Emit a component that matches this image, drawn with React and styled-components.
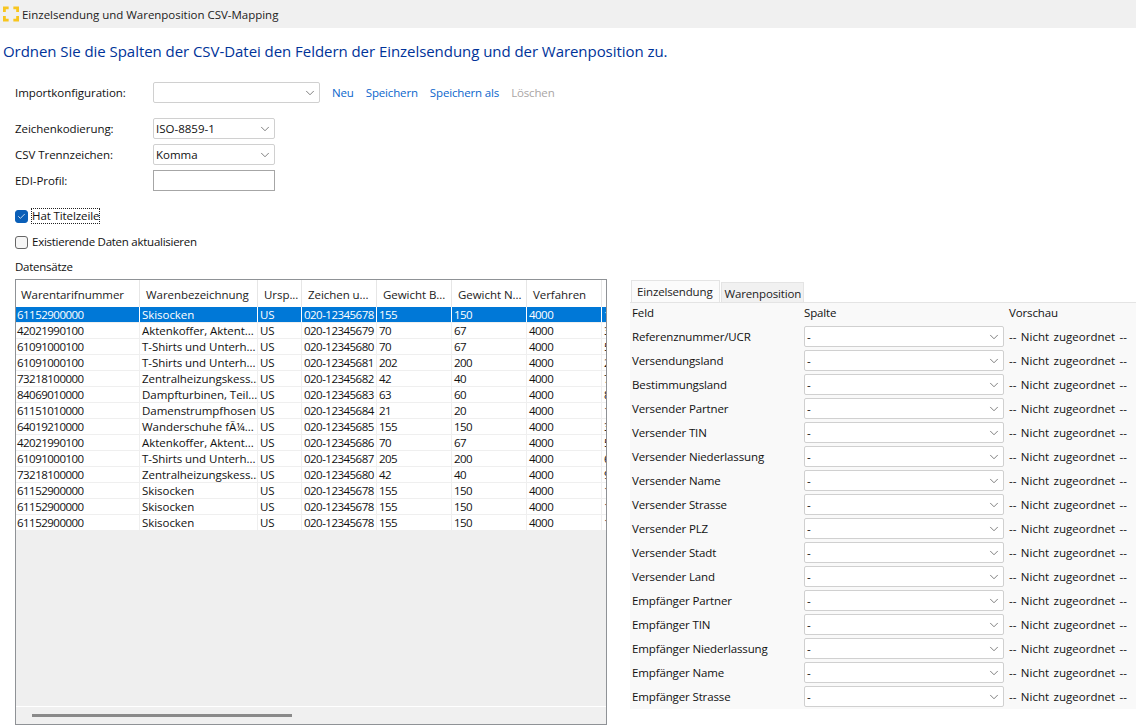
import React from 'react';
import styled, { createGlobalStyle } from 'styled-components';
import { ChevronDown, Check } from 'lucide-react';

const Global = createGlobalStyle`
  html, body { margin: 0; padding: 0; background: #fff; overflow: hidden; }
  body { font-family: "Open Sans", "Noto Sans", "Liberation Sans", sans-serif; font-size: 11.5px; color: #111; }
  * { box-sizing: border-box; }
`;

const Page = styled.div`width: 1136px; height: 725px; display: flex; flex-direction: column; overflow: hidden;`;
const TitleBar = styled.div`height: 28px; background: #f0f0f0; display: flex; align-items: center; gap: 3px; padding: 0 0 0 3px; font-size: 11.5px; color: #222; letter-spacing: -0.02px;`;
const Heading = styled.h1`margin: 14px 0 0 3px; height: 18px; font-size: 15px; line-height: 18px; font-weight: 400; color: #003399; letter-spacing: -0.05px;`;
const Body = styled.div`flex: 1; display: flex; flex-direction: column; padding: 22px 0 0 15px; min-height: 0;`;
const ConfigRow = styled.div`display: flex; align-items: center; height: 21px;`;
const FieldRow = styled.div`display: flex; align-items: center; height: 21px; margin-top: ${p => p.$mt || 5}px;`;
const FieldLabel = styled.label`width: 138px; flex: none; color: #111; letter-spacing: -0.05px;`;
const SelectBox = styled.div`
  width: ${p => p.$w}px; height: 21px; flex: none; background: #fff; border: 1px solid #d0d0d0; border-radius: 2px;
  display: flex; align-items: center; justify-content: space-between; padding: 0 2px 0 2px; color: #111; letter-spacing: 0;
  svg { color: #4a4a4a; }
`;
const TextBox = styled.div`width: 122px; height: 21px; border: 1px solid #a6a6a6; background: #fff;`;
const LinkBar = styled.div`display: flex; margin-left: 12px; gap: 12px; letter-spacing: -0.15px;`;
const Action = styled.a`color: ${p => p.$off ? '#a9a5a5' : '#0a66cc'};`;
const CheckRow = styled.div`display: flex; align-items: center; height: 16px; margin-top: ${p => p.$mt}px; gap: 3px;`;
const CheckBoxMark = styled.span`
  width: 13px; height: 13px; border-radius: 3px; display: inline-flex; align-items: center; justify-content: center;
  background: ${p => p.$on ? '#0a5fb8' : '#f6f6f6'}; border: 1px solid ${p => p.$on ? '#0a5fb8' : '#666'}; color: #fff;
`;
const CheckLabel = styled.span`
  border: 1px dotted ${p => p.$focus ? '#222' : 'transparent'}; line-height: 14px; padding: 0;
  letter-spacing: ${p => p.$focus ? '-0.1px' : '-0.26px'};
`;
const SectionLabel = styled.div`margin-top: 9px; height: 16px; line-height: 16px; letter-spacing: -0.25px;`;
const Columns = styled.div`display: flex; align-items: flex-start; gap: 23px; margin-top: 4px; flex: 1; min-height: 0;`;
const TableFrame = styled.div`width: 592px; height: 446px; flex: none; border: 1px solid #8f9296; background: #efefef; display: flex; flex-direction: column; overflow: hidden;`;
const TableScroll = styled.div`flex: 1; overflow: hidden; min-height: 0;`;
const HeadRow = styled.div`display: flex; height: 27px; background: #fff; width: 600px;`;
const HeadCell = styled.div`
  width: ${p => p.$w}px; flex: none; padding: 1px 0 0 6px; line-height: 27px; white-space: nowrap; overflow: hidden;
  border-right: 1px solid #e6e6e6; color: #222; letter-spacing: -0.05px;
  &:first-child { padding-left: 5px; }
`;
const Row = styled.div`display: flex; height: 16px; width: 600px; background: ${p => p.$sel ? '#0078d7' : '#fff'}; color: ${p => p.$sel ? '#fff' : '#111'}; border-bottom: 1px solid #efefef;`;
const Cell = styled.div`
  width: ${p => p.$w}px; flex: none; padding: 0 0 0 2px; line-height: 15px; white-space: nowrap; overflow: hidden;
  border-right: 1px solid ${p => p.$sel ? '#fff' : '#efefef'};
  letter-spacing: ${p => p.$num ? '-0.52px' : '-0.05px'};
  &:first-child { padding-left: 1px; }
`;
const HScroll = styled.div`height: 18px; flex: none; border-top: 1px solid #fff; background: #f0f0f0; display: flex; align-items: center; padding-left: 16px;`;
const Thumb = styled.div`width: 260px; height: 3px; background: #8a8a8a;`;
const MapPanel = styled.div`width: 506px; flex: none; display: flex; flex-direction: column; margin-top: 1px;`;
const TabBar = styled.div`display: flex; align-items: flex-end; height: 22px; padding-left: 1px;`;
const Tab = styled.div`
  height: ${p => p.$on ? 22 : 20}px; padding: 0 ${p => p.$on ? '6px 0 5px' : '2px 0 3px'}; margin-right: 1px; line-height: ${p => p.$on ? 21 : 22}px; white-space: nowrap;
  background: ${p => p.$on ? '#fbfbfb' : '#f1f1f1'}; border: 1px solid #e4e4e4; border-bottom: none; color: #222; letter-spacing: -0.15px;
`;
const MapBody = styled.div`height: 407px; background: #f9f9f9; border-top: 1px solid #e4e4e4; overflow: hidden; padding: 0 0 0 2px; letter-spacing: -0.13px;`;
const MapHead = styled.div`display: grid; grid-template-columns: 172px 205px 1fr; height: 20px; line-height: 20px;`;
const MapRow = styled.div`display: grid; grid-template-columns: 172px 205px 1fr; height: 21px; align-items: center; margin-top: 3px; white-space: nowrap;`;
const Preview = styled.span`word-spacing: 1.4px; letter-spacing: 0.02px;`;

const Chevron = () => <ChevronDown size={14} strokeWidth={1.2} />;

const Logo = () => (
  <svg width="16" height="16" viewBox="0 0 17 16">
    <path d="M0 0h6v3H3v3H0zM11 0h6v6h-3V3h-3zM0 10h3v3h3v3H0zM14 10h3v6h-6v-3h3z" fill="#f7c51e" />
  </svg>
);

const cols = [124, 118, 44, 75, 75, 75, 75, 14];
const heads = ['Warentarifnummer', 'Warenbezeichnung', 'Ursp...', 'Zeichen u...', 'Gewicht B...', 'Gewicht N...', 'Verfahren', ''];
const rows = [
  ['61152900000', 'Skisocken', 'US', '020-12345678', '155', '150', '4000', '1'],
  ['42021990100', 'Aktenkoffer, Aktent...', 'US', '020-12345679', '70', '67', '4000', '3'],
  ['61091000100', 'T-Shirts und Unterh...', 'US', '020-12345680', '70', '67', '4000', '5'],
  ['61091000100', 'T-Shirts und Unterh...', 'US', '020-12345681', '202', '200', '4000', '2'],
  ['73218100000', 'Zentralheizungskess...', 'US', '020-12345682', '42', '40', '4000', '7'],
  ['84069010000', 'Dampfturbinen, Teil...', 'US', '020-12345683', '63', '60', '4000', '8'],
  ['61151010000', 'Damenstrumpfhosen', 'US', '020-12345684', '21', '20', '4000', '1'],
  ['64019210000', 'Wanderschuhe fÃ¼...', 'US', '020-12345685', '155', '150', '4000', '3'],
  ['42021990100', 'Aktenkoffer, Aktent...', 'US', '020-12345686', '70', '67', '4000', '5'],
  ['61091000100', 'T-Shirts und Unterh...', 'US', '020-12345687', '205', '200', '4000', '6'],
  ['73218100000', 'Zentralheizungskess...', 'US', '020-12345680', '42', '40', '4000', '9'],
  ['61152900000', 'Skisocken', 'US', '020-12345678', '155', '150', '4000', '1'],
  ['61152900000', 'Skisocken', 'US', '020-12345678', '155', '150', '4000', '1'],
  ['61152900000', 'Skisocken', 'US', '020-12345678', '155', '150', '4000', '1'],
];
const fields = ['Referenznummer/UCR', 'Versendungsland', 'Bestimmungsland', 'Versender Partner', 'Versender TIN', 'Versender Niederlassung', 'Versender Name', 'Versender Strasse', 'Versender PLZ', 'Versender Stadt', 'Versender Land', 'Empfänger Partner', 'Empfänger TIN', 'Empfänger Niederlassung', 'Empfänger Name', 'Empfänger Strasse'];

export default function App() {
  return (
    <Page>
      <Global />
      <TitleBar><Logo /><span>Einzelsendung und Warenposition CSV-Mapping</span></TitleBar>
      <Heading>Ordnen Sie die Spalten der CSV-Datei den Feldern der Einzelsendung und der Warenposition zu.</Heading>
      <Body>
        <ConfigRow>
          <FieldLabel>Importkonfiguration:</FieldLabel>
          <SelectBox $w={167}><span /><Chevron /></SelectBox>
          <LinkBar>
            <Action>Neu</Action><Action>Speichern</Action><Action>Speichern als</Action><Action $off>Löschen</Action>
          </LinkBar>
        </ConfigRow>
        <FieldRow $mt={15}><FieldLabel>Zeichenkodierung:</FieldLabel><SelectBox $w={122}><span>ISO-8859-1</span><Chevron /></SelectBox></FieldRow>
        <FieldRow><FieldLabel>CSV Trennzeichen:</FieldLabel><SelectBox $w={122}><span>Komma</span><Chevron /></SelectBox></FieldRow>
        <FieldRow><FieldLabel>EDI-Profil:</FieldLabel><TextBox /></FieldRow>
        <CheckRow $mt={17}><CheckBoxMark $on><Check size={9} strokeWidth={2} /></CheckBoxMark><CheckLabel $focus>Hat Titelzeile</CheckLabel></CheckRow>
        <CheckRow $mt={10}><CheckBoxMark /><CheckLabel>Existierende Daten aktualisieren</CheckLabel></CheckRow>
        <SectionLabel>Datensätze</SectionLabel>
        <Columns>
          <TableFrame>
            <TableScroll>
              <HeadRow>{heads.map((h, i) => <HeadCell key={i} $w={cols[i]}>{h}</HeadCell>)}</HeadRow>
              {rows.map((r, i) => (
                <Row key={i} $sel={i === 0}>
                  {r.map((c, j) => <Cell key={j} $w={cols[j]} $sel={i === 0} $num={j === 0 || j >= 3}>{c}</Cell>)}
                </Row>
              ))}
            </TableScroll>
            <HScroll><Thumb /></HScroll>
          </TableFrame>
          <MapPanel>
            <TabBar><Tab $on>Einzelsendung</Tab><Tab>Warenposition</Tab></TabBar>
            <MapBody>
              <MapHead><span>Feld</span><span>Spalte</span><span>Vorschau</span></MapHead>
              {fields.map(f => (
                <MapRow key={f}>
                  <span>{f}</span>
                  <SelectBox $w={200}><span>-</span><Chevron /></SelectBox>
                  <Preview>-- Nicht zugeordnet --</Preview>
                </MapRow>
              ))}
            </MapBody>
          </MapPanel>
        </Columns>
      </Body>
    </Page>
  );
}
